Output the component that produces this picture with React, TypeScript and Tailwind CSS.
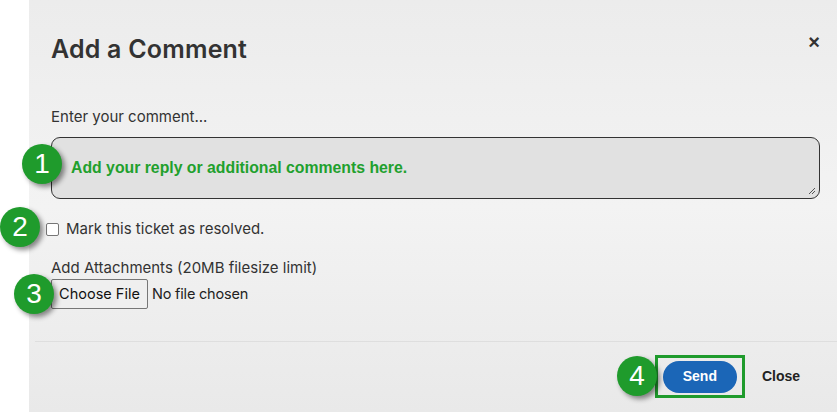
import React from 'react';

const Badge: React.FC<{ n: number; className: string }> = ({ n, className }) => (
  <div
    className={`absolute w-[40px] h-[40px] rounded-full bg-[#1f9b2c] text-white flex items-center justify-center text-[28px] leading-none shadow-[3px_3px_5px_rgba(0,0,0,0.45)] font-['Liberation_Sans',Arial,sans-serif] ${className}`}
  >
    {n}
  </div>
);

const App: React.FC = () => {
  return (
    <div className="relative w-full h-[412px] flex bg-white overflow-hidden font-['Inter',sans-serif] text-[#333]">
      <div className="w-[29px] shrink-0 bg-white" />

      {/* Modal panel */}
      <div className="flex-1 flex flex-col bg-gradient-to-b from-[#ececec] via-[#f3f3f3] to-[#e9e9e9]">
        <div className="flex items-start justify-between pl-[22px] pr-[18px] pt-[34px]">
          <h2 className="text-[25px] font-semibold leading-[30px] tracking-[0.2px] text-[#333]">Add a Comment</h2>
          <button className="-mt-[2px] text-[20px] font-bold leading-none text-[#333] font-['Liberation_Sans',Arial,sans-serif]">
            ×
          </button>
        </div>

        <div className="pl-[22px] pr-[18px] pt-[44px] flex flex-col">
          <label className="text-[15px] leading-[18px] text-[#333]">Enter your comment...</label>
          <div className="mt-[11px] h-[62px] w-[769px] rounded-[9px] border-[1.5px] border-[#333] bg-[#e1e1e1] flex items-center pl-[19px] relative">
            <span className="text-[15.8px] font-bold text-[#21a02d] font-['Liberation_Sans',Arial,sans-serif]">
              Add your reply or additional comments here.
            </span>
            <svg className="absolute right-[3px] bottom-[3px]" width="8" height="8" viewBox="0 0 8 8">
              <path d="M1 7 L7 1 M4 7 L7 4" stroke="#555" strokeWidth="1" />
            </svg>
          </div>

          <div className="mt-[21px] flex items-center -ml-[5px]">
            <span className="w-[13px] h-[13px] border border-[#767676] rounded-[2px] bg-white" />
            <span className="ml-[7px] text-[15px] leading-[18px] text-[#333]">Mark this ticket as resolved.</span>
          </div>

          <label className="mt-[21px] text-[15px] leading-[18px] text-[#333]">
            Add Attachments (20MB filesize limit)
          </label>
          <div className="mt-[2px] flex items-center">
            <span className="h-[30px] w-[97px] border border-[#767676] rounded-[2px] bg-[#efefef] flex items-center justify-center text-[14.5px] text-[#111]">
              Choose File
            </span>
            <span className="ml-[4px] text-[14.5px] text-[#222] tracking-[-0.2px]">No file chosen</span>
          </div>
        </div>

        <div className="mt-[32px] ml-[6px] border-t border-[#dedede]" />

        <div className="flex items-center justify-end pr-[38px] pt-[13px]">
          <div className="border-[3px] border-[#1f9b2c] px-[3px] py-[5px] w-[90px] h-[43px] flex items-center justify-center">
            <button className="w-[74px] h-[32px] rounded-full bg-[#1b66b7] text-white text-[14px] font-bold font-['Liberation_Sans',Arial,sans-serif]">
              Send
            </button>
          </div>
          <button className="ml-[17px] text-[14px] font-bold text-[#222] font-['Liberation_Sans',Arial,sans-serif]">
            Close
          </button>
        </div>
      </div>

      {/* Annotation badges */}
      <Badge n={1} className="left-[22px] top-[144px]" />
      <Badge n={2} className="left-[0px] top-[207px]" />
      <Badge n={3} className="left-[14px] top-[274px]" />
      <Badge n={4} className="left-[617px] top-[356px]" />
    </div>
  );
};

export default App;
